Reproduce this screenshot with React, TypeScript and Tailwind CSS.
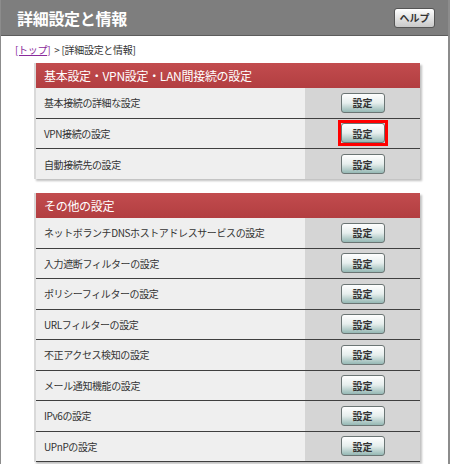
import React from "react";

const basicRows = ["基本接続の詳細な設定", "VPN接続の設定", "自動接続先の設定"];
const otherRows = [
  "ネットボランチDNSホストアドレスサービスの設定",
  "入力遮断フィルターの設定",
  "ポリシーフィルターの設定",
  "URLフィルターの設定",
  "不正アクセス検知の設定",
  "メール通知機能の設定",
  "IPv6の設定",
  "UPnPの設定",
];

function SetButton() {
  return (
    <button className="h-[20px] w-[44px] rounded-[3px] border border-[#6b7574] bg-linear-to-b from-white via-[#e6eeed] to-[#95b8b4] text-[10px] font-bold text-[#333]">
      設定
    </button>
  );
}

function SettingsCard({
  title,
  rows,
  highlightIndex,
}: {
  title: string;
  rows: string[];
  highlightIndex?: number;
}) {
  return (
    <div className="mx-[33px] w-[386px] border-l-2 border-[#d9d9d9] bg-[#efefef] shadow-[2px_2px_2px_rgba(0,0,0,0.25)]">
      <div className="flex h-[25px] items-center bg-linear-to-b from-[#c24c4e] to-[#b23e41] pl-[8px] text-[12px] tracking-[-0.3px] text-white">
        {title}
      </div>
      {rows.map((label, i) => (
        <div
          key={label}
          className={
            i === rows.length - 1 && highlightIndex !== undefined
              ? "flex h-[30px] items-stretch"
              : "flex h-[30.5px] items-stretch border-b border-[#3f3f3f]"
          }
        >
          <div className="flex flex-1 items-center pl-[8px] text-[10px] tracking-[-0.4px] text-[#333]">
            {label}
          </div>
          <div className="flex w-[115px] items-center justify-center bg-[#d5d5d5]">
            {i === highlightIndex ? (
              <span className="-m-[3px] inline-flex border-[3px] border-[#ff0000]">
                <SetButton />
              </span>
            ) : (
              <SetButton />
            )}
          </div>
        </div>
      ))}
    </div>
  );
}

export default function App() {
  return (
    <div className="h-[464px] w-[450px] overflow-hidden border-l border-r-2 border-[#8c8c8c] bg-white font-['Noto_Sans_CJK_JP','Noto_Sans',sans-serif]">
      <header className="flex h-[36px] items-center justify-between border-b border-[#5c5c5c] bg-[#7e7e7e] pl-[16px] pr-[13px]">
        <h1 className="text-[16px] font-bold tracking-[-0.3px] text-white">詳細設定と情報</h1>
        <button className="h-[20px] w-[41px] rounded-[3px] border border-[#555] bg-linear-to-b from-white to-[#c9c9c9] text-[10px] font-bold text-[#333]">
          ヘルプ
        </button>
      </header>

      <nav className="flex h-[27px] items-center pl-[14px] text-[10px] tracking-[-0.3px] text-[#333]">
        <a className="text-[#8a2b9b] underline">[トップ]</a>
        <span className="ml-[4px]">&gt; [詳細設定と情報]</span>
      </nav>

      <SettingsCard
        title="基本設定・VPN設定・LAN間接続の設定"
        rows={basicRows}
        highlightIndex={1}
      />

      <div className="h-[14px]" />

      <SettingsCard title="その他の設定" rows={otherRows} />
    </div>
  );
}
